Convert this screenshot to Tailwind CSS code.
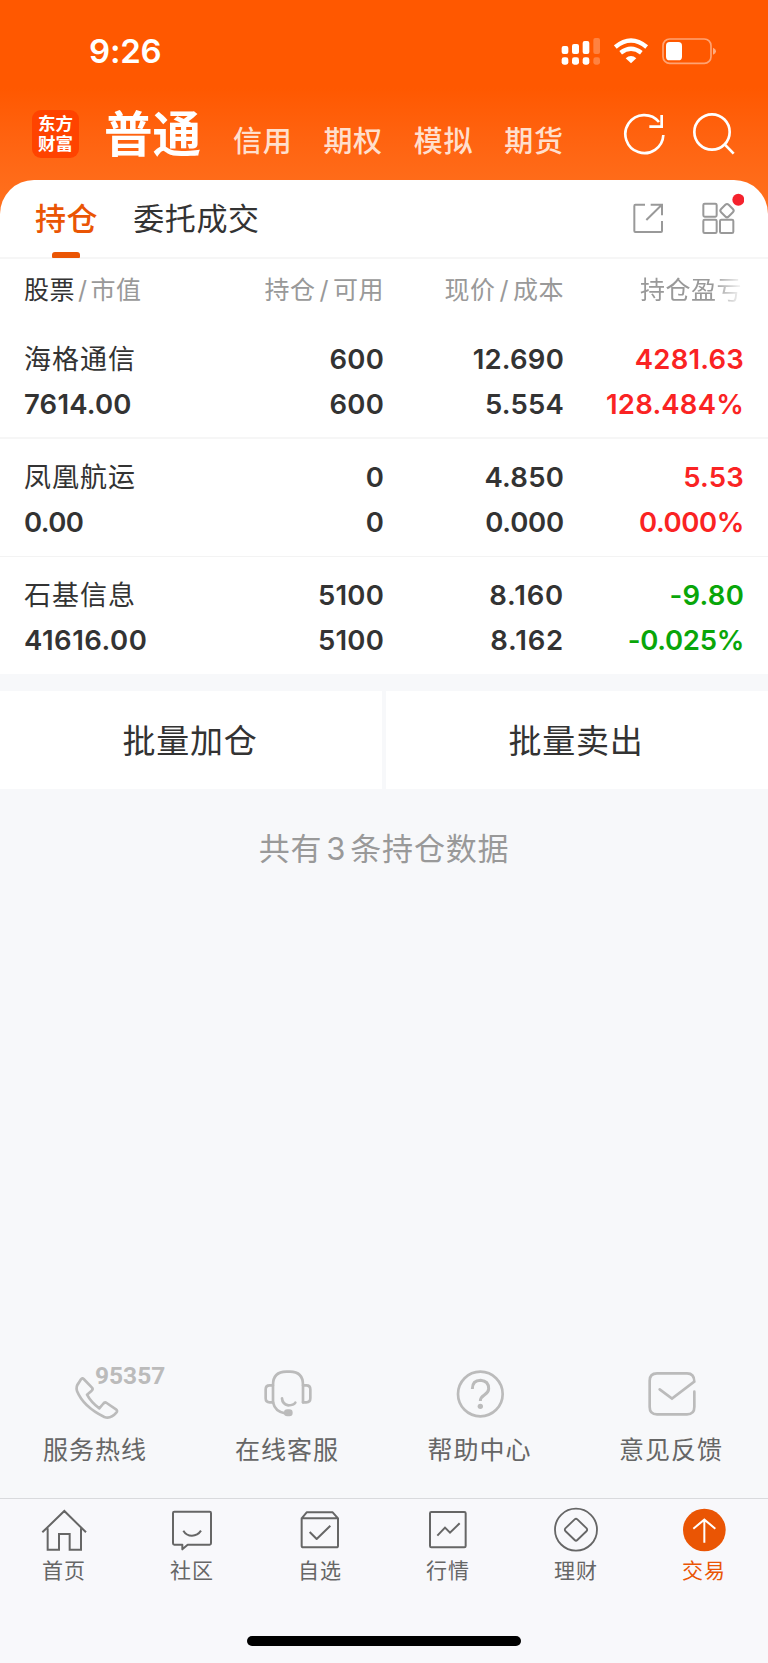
<!DOCTYPE html>
<html lang="zh-CN">
<head>
    <meta charset="UTF-8">
    <meta name="viewport" content="width=device-width, initial-scale=1.0">
    <title>持仓</title>
    <script src="https://cdn.jsdelivr.net/npm/@tailwindcss/browser@4"></script>
</head>
<body class="bg-[#f7f8fa]">

    <div class="w-[768px] h-[1663px] flex flex-col overflow-hidden bg-[#f7f8fa] text-[#333] font-['Inter','Noto_Sans_CJK_SC',sans-serif]">

        <div class="bg-linear-to-b from-[#ff5800] from-40% to-[#ff7320] to-100% h-[220px] -mb-[40px] shrink-0">
            <!-- Status bar -->
            <div class="h-[102px] flex items-center justify-between pl-[89px] pr-[51px]">
                <span class="text-[33px] leading-[40px] font-semibold text-white tracking-[-0.2px]">9:26</span>
                <div class="flex items-center">
                    <svg class="w-[40px] h-[28px] mr-[13px]" viewBox="0 0 120 84" fill="#fff">
                        <rect x="2" y="27" width="20" height="24" rx="6"/>
                        <rect x="33" y="21" width="21" height="30" rx="6"/>
                        <rect x="65" y="12" width="20" height="39" rx="6"/>
                        <rect x="97" y="3" width="20" height="48" rx="6" opacity=".25"/>
                        <rect x="2" y="61" width="20" height="22" rx="7"/>
                        <rect x="33" y="61" width="21" height="22" rx="7"/>
                        <rect x="65" y="61" width="20" height="22" rx="7"/>
                        <rect x="97" y="61" width="20" height="22" rx="7" opacity=".25"/>
                    </svg>
                    <svg class="w-[35px] h-[26px] mr-[13px]" viewBox="0 0 105 78" fill="none" stroke="#fff" stroke-width="13">
                        <path d="M4 27Q51-12 98 27"/>
                        <path d="M20 44Q51 20 82 44"/>
                        <path d="M35 61Q51 47 67 61L51 76Z" fill="#fff" stroke="none"/>
                    </svg>
                    <svg class="w-[55px] h-[28px]" viewBox="0 0 165 84" fill="none">
                        <rect x="3" y="6" width="144" height="73" rx="20" stroke="#fff" stroke-opacity=".45" stroke-width="5"/>
                        <rect x="12" y="15" width="48" height="55" rx="11" fill="#fff"/>
                        <path d="M153 32Q162 36 162 42.500T153 53Z" fill="#fff" opacity=".5"/>
                    </svg>
                </div>
            </div>
            <!-- Account types -->
            <div class="h-[78px] flex items-start pl-8">
                <div class="mt-2 w-[47px] h-[48px] rounded-[9px] bg-[#ff4300] text-white text-[17.500px] leading-[20px] font-bold flex flex-col items-center justify-center">
                    <span>东方</span>
                    <span>财富</span>
                </div>
                <span class="ml-[25px] mt-[2px] text-[48.500px] leading-[62px] font-bold text-white">普通</span>
                <div class="flex ml-[32px] mt-[20px] gap-[31px] text-[29px] leading-[40px] font-medium text-[#ffdfcd] tracking-[0.7px]">
                    <span>信用</span>
                    <span>期权</span>
                    <span>模拟</span>
                    <span>期货</span>
                </div>
                <svg class="w-[42px] h-[44px] ml-[59px] mt-[10px]" viewBox="0 0 126 132" fill="none" stroke="#fff" stroke-width="8">
                    <path d="M121 69A57 57 0 1 1 108 30"/>
                    <path d="M79 44H116V9"/>
                </svg>
                <svg class="w-[43px] h-[44px] ml-[28px] mt-[10px]" viewBox="0 0 129 132" fill="none" stroke="#fff" stroke-width="8">
                    <circle cx="57" cy="60" r="53"/>
                    <path d="M95 97L122 125"/>
                </svg>
            </div>
        </div>

        <!-- Tabs -->
        <div class="h-[79px] shrink-0 relative bg-white rounded-t-[34px] border-b-2 border-[#f6f6f6] flex items-center pl-[35px] pr-[27px]">
            <span class="text-[31px] leading-[40px] pt-px font-medium text-[#ea5504] tracking-[0.6px]">持仓</span>
            <span class="ml-[35px] text-[31px] leading-[40px] pt-px tracking-[0.6px]">委托成交</span>
            <svg class="w-[30px] h-[31px] ml-auto mr-[39px]" viewBox="0 0 90 93" fill="none" stroke="#999" stroke-width="6">
                <path d="M36 5H7Q4 5 4 9V84Q4 87 7 87H84Q87 87 87 84V54"/>
                <path d="M53 5H87V37M85 7L40 51"/>
            </svg>
            <svg class="w-[42px] h-[42px] -mt-[9px] -mr-[3px]" viewBox="0 0 126 126" fill="none" stroke="#999" stroke-width="6">
                <rect x="4" y="32" width="40" height="39" rx="4"/>
                <rect x="4" y="80" width="40" height="40" rx="4"/>
                <rect x="54" y="80" width="40" height="40" rx="4"/>
                <rect x="59" y="37" width="32" height="32" rx="7" transform="rotate(45 75 53)"/>
                <circle cx="109" cy="20" r="18" fill="#f5222d" stroke="none"/>
            </svg>
            <div class="absolute left-[52px] -bottom-[1px] w-[28px] h-[6px] rounded-t-[3px] rounded-b-[1px] bg-[#ea5504]"></div>
        </div>

        <!-- Positions -->
        <div class="bg-white shrink-0">
            <div class="h-[62px] grid grid-cols-4 px-6 items-center text-right text-[25px] leading-[36px] text-[#999] tracking-[0.5px]">
                <span class="text-left"><span class="text-[#333]">股票</span><span class="mx-[3px]">/</span>市值</span>
                <span>持仓<span class="mx-[4px]">/</span>可用</span>
                <span>现价<span class="mx-[4px]">/</span>成本</span>
                <span class="justify-self-end w-[104px] text-left whitespace-nowrap overflow-hidden mask-r-from-70% mask-r-to-100%">持仓盈亏</span>
            </div>
            <div class="h-[118px] grid grid-cols-4 px-6 pt-4 content-start text-right text-[27.500px] leading-[45px] font-semibold tracking-[0.2px] border-b-2 border-[#f6f6f6]">
                <span class="text-left text-[27px] font-normal tracking-[1px]">海格通信</span>
                <span>600</span>
                <span>12.690</span>
                <span class="text-[#fa2323]">4281.63</span>
                <span class="text-left">7614.00</span>
                <span>600</span>
                <span>5.554</span>
                <span class="text-[#fa2323]">128.484%</span>
            </div>
            <div class="h-[118px] grid grid-cols-4 px-6 pt-4 content-start text-right text-[27.500px] leading-[45px] font-semibold tracking-[0.2px] border-b border-[#f3f3f3]">
                <span class="text-left text-[27px] font-normal tracking-[1px]">凤凰航运</span>
                <span>0</span>
                <span>4.850</span>
                <span class="text-[#fa2323]">5.53</span>
                <span class="text-left tracking-[-0.600px]">0.00</span>
                <span>0</span>
                <span class="tracking-[-0.200px]">0.000</span>
                <span class="text-[#fa2323] tracking-[-0.400px]">0.000%</span>
            </div>
            <div class="h-[117px] grid grid-cols-4 px-6 pt-4 content-start text-right text-[27.500px] leading-[45px] font-semibold tracking-[0.2px]">
                <span class="text-left text-[27px] font-normal tracking-[1px]">石基信息</span>
                <span>5100</span>
                <span class="tracking-[0.8px]">8.160</span>
                <span class="text-[#09a609]">-9.80</span>
                <span class="text-left tracking-[0.500px]">41616.00</span>
                <span>5100</span>
                <span class="tracking-[0.8px]">8.162</span>
                <span class="text-[#09a609] tracking-[-0.300px]">-0.025%</span>
            </div>
        </div>

        <!-- Batch actions -->
        <div class="mt-[17px] h-[98px] shrink-0 grid grid-cols-2 gap-1 text-[33px] tracking-[0.8px]">
            <button class="bg-white pt-[3px] pr-[2px]">批量加仓</button>
            <button class="bg-white pt-[3px] pr-[2px]">批量卖出</button>
        </div>
        <p class="mt-[40px] text-center text-[31px] leading-[40px] text-[#999] tracking-[0.8px]">共有<span class="mx-[4px]">3</span>条持仓数据</p>

        <!-- Services -->
        <div class="mt-auto shrink-0 h-[133px] grid grid-cols-4 text-center text-[25px] leading-[36px] tracking-[1px] text-[#666]">
            <div class="flex flex-col items-center">
                <div class="relative w-[48px] h-[66px]">
                    <svg class="w-[48px] h-[65px]" viewBox="0 0 144 195" fill="none" stroke="#bbb" stroke-width="8" stroke-linejoin="round">
                        <path d="M35 42L60 68Q64 73 59 77L45 89Q58 113 82 130L93 117Q98 110 104 114L132 133Q138 138 133 143Q116 163 97 156Q34 125 15 78Q11 64 20 54L27 43Q31 38 35 42Z"/>
                    </svg>
                    <span class="absolute left-[23px] -top-[3px] text-[24.500px] leading-[28px] font-bold text-[#bbb] font-['Roboto'] tracking-[0px]">95357</span>
                </div>
                <span class="pr-[2px] pt-px">服务热线</span>
            </div>
            <div class="flex flex-col items-center">
                <svg class="w-[48px] h-[65px] mb-px" viewBox="0 0 144 195" fill="none" stroke="#bbb" stroke-width="8" stroke-linecap="round">
                    <path d="M27 112V60Q27 20 67 20H78Q117 20 117 60V112"/>
                    <path d="M27 61H17Q5 61 5 73V100Q5 112 17 112H27M117 61H127Q139 61 139 73V100Q139 112 127 112H117"/>
                    <path d="M27 112Q33 141 64 145M54 100Q55 117 73 121Q89 121 94 113"/>
                    <rect x="64" y="137" width="18" height="13" rx="6" fill="#bbb"/>
                </svg>
                <span class="pr-[2px] pt-px">在线客服</span>
            </div>
            <div class="flex flex-col items-center">
                <svg class="w-[48px] h-[65px] mb-px" viewBox="0 0 144 195" fill="none" stroke="#bbb" stroke-width="8">
                    <circle cx="73" cy="87" r="67"/>
                    <path stroke-width="9" d="M49 72Q49 46 74 46Q98 48 98 71Q98 81 85 90Q73 98 73 108"/>
                    <circle cx="73" cy="124" r="8" fill="#bbb" stroke="none"/>
                </svg>
                <span class="pr-px pt-px">帮助中心</span>
            </div>
            <div class="flex flex-col items-center">
                <svg class="w-[48px] h-[65px] mb-px" viewBox="0 0 144 195" fill="none" stroke="#bbb" stroke-width="8" stroke-linecap="round">
                    <path d="M139 80V126Q139 148 117 148H27Q5 148 5 126V47Q5 25 27 25H117Q139 25 139 50L72 101L35 73"/>
                </svg>
                <span class="pr-[2px] pt-px">意见反馈</span>
            </div>
        </div>

        <!-- Bottom nav -->
        <div class="shrink-0 h-[165px] border-t border-[#d9dadd] bg-[#f8f8fb] flex flex-col">
            <div class="grid grid-cols-6 text-[21px] leading-[30px] text-[#666] tracking-[1px]">
                <div class="flex flex-col items-center">
                    <svg class="w-[48px] h-[57px]" viewBox="0 0 144 171" fill="none" stroke="#666" stroke-width="6">
                        <path d="M7 100L73 36L138 100M23 88V152H57V105H89V152H123V88"/>
                    </svg>
                    <span>首页</span>
                </div>
                <div class="flex flex-col items-center">
                    <svg class="w-[48px] h-[57px]" viewBox="0 0 144 171" fill="none" stroke="#666" stroke-width="6" stroke-linejoin="round">
                        <path d="M19 38H125Q129 38 129 42V133Q129 137 125 137H59L43 151V137H19Q15 137 15 133V42Q15 38 19 38Z"/>
                        <path d="M46 95Q55 110 72 110T99 95"/>
                    </svg>
                    <span>社区</span>
                </div>
                <div class="flex flex-col items-center">
                    <svg class="w-[48px] h-[57px]" viewBox="0 0 144 171" fill="none" stroke="#666" stroke-width="6" stroke-linejoin="round">
                        <path d="M17 58L32 40H110L126 58M17 58H126V140Q126 145 121 145H22Q17 145 17 140Z"/>
                        <path d="M41 99L62 120L103 80"/>
                    </svg>
                    <span>自选</span>
                </div>
                <div class="flex flex-col items-center">
                    <svg class="w-[48px] h-[57px]" viewBox="0 0 144 171" fill="none" stroke="#666" stroke-width="6">
                        <rect x="18" y="39" width="107" height="106" rx="4"/>
                        <path d="M40 110L63 86L78 101L107 73"/>
                    </svg>
                    <span>行情</span>
                </div>
                <div class="flex flex-col items-center">
                    <svg class="w-[48px] h-[57px]" viewBox="0 0 144 171" fill="none" stroke="#666" stroke-width="5.500" stroke-linejoin="round">
                        <circle cx="72" cy="92" r="63"/>
                        <path d="M68 61Q72 57 76 61L104 88Q107 92 104 96L76 123Q72 127 68 123L40 96Q37 92 40 88Z"/>
                    </svg>
                    <span>理财</span>
                </div>
                <div class="flex flex-col items-center text-[#ea5504]">
                    <svg class="w-[48px] h-[57px]" viewBox="0 0 144 171" fill="none" stroke="#fff" stroke-width="6">
                        <circle cx="73" cy="93" r="64" fill="#ea5504" stroke="none"/>
                        <path d="M73 131V62M40 89L73 62L106 89"/>
                    </svg>
                    <span>交易</span>
                </div>
            </div>
            <div class="mx-auto mt-auto mb-[17px] w-[274px] h-[10px] rounded-full bg-black"></div>
        </div>
    </div>

</body>
</html>
